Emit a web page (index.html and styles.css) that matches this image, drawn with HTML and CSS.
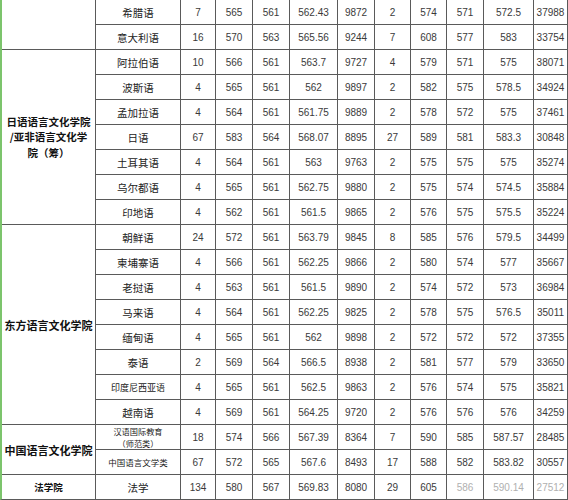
FILE: index.html
```html
<!DOCTYPE html>
<html lang="zh-CN">
<head>
<meta charset="utf-8">
<title>录取分数</title>
<link rel="stylesheet" href="styles.css">
</head>
<body>
<div class="sheet">
  <div class="c college span2"></div>
  <div class="c lang">希腊语</div><div class="c num">7</div><div class="c num">565</div><div class="c num">561</div><div class="c num">562.43</div><div class="c num">9872</div><div class="c num">2</div><div class="c num">574</div><div class="c num">571</div><div class="c num">572.5</div><div class="c num">37988</div>
  <div class="c lang">意大利语</div><div class="c num">16</div><div class="c num">570</div><div class="c num">563</div><div class="c num">565.56</div><div class="c num">9244</div><div class="c num">7</div><div class="c num">608</div><div class="c num">577</div><div class="c num">583</div><div class="c num">33754</div>

  <div class="c college span7"><span class="line">日语语言文化学院</span><span class="line">/亚非语言文化学</span><span class="line">院（筹）</span></div>
  <div class="c lang">阿拉伯语</div><div class="c num">10</div><div class="c num">566</div><div class="c num">561</div><div class="c num">563.7</div><div class="c num">9727</div><div class="c num">4</div><div class="c num">579</div><div class="c num">571</div><div class="c num">575</div><div class="c num">38071</div>
  <div class="c lang">波斯语</div><div class="c num">4</div><div class="c num">565</div><div class="c num">561</div><div class="c num">562</div><div class="c num">9897</div><div class="c num">2</div><div class="c num">582</div><div class="c num">575</div><div class="c num">578.5</div><div class="c num">34924</div>
  <div class="c lang">孟加拉语</div><div class="c num">4</div><div class="c num">564</div><div class="c num">561</div><div class="c num">561.75</div><div class="c num">9889</div><div class="c num">2</div><div class="c num">578</div><div class="c num">572</div><div class="c num">575</div><div class="c num">37461</div>
  <div class="c lang">日语</div><div class="c num">67</div><div class="c num">583</div><div class="c num">564</div><div class="c num">568.07</div><div class="c num">8895</div><div class="c num">27</div><div class="c num">589</div><div class="c num">581</div><div class="c num">583.3</div><div class="c num">30848</div>
  <div class="c lang">土耳其语</div><div class="c num">4</div><div class="c num">564</div><div class="c num">561</div><div class="c num">563</div><div class="c num">9763</div><div class="c num">2</div><div class="c num">575</div><div class="c num">575</div><div class="c num">575</div><div class="c num">35274</div>
  <div class="c lang">乌尔都语</div><div class="c num">4</div><div class="c num">565</div><div class="c num">561</div><div class="c num">562.75</div><div class="c num">9880</div><div class="c num">2</div><div class="c num">575</div><div class="c num">574</div><div class="c num">574.5</div><div class="c num">35884</div>
  <div class="c lang">印地语</div><div class="c num">4</div><div class="c num">562</div><div class="c num">561</div><div class="c num">561.5</div><div class="c num">9865</div><div class="c num">2</div><div class="c num">576</div><div class="c num">575</div><div class="c num">575.5</div><div class="c num">35224</div>

  <div class="c college span8">东方语言文化学院</div>
  <div class="c lang">朝鲜语</div><div class="c num">24</div><div class="c num">572</div><div class="c num">561</div><div class="c num">563.79</div><div class="c num">9845</div><div class="c num">8</div><div class="c num">585</div><div class="c num">576</div><div class="c num">579.5</div><div class="c num">34499</div>
  <div class="c lang">柬埔寨语</div><div class="c num">4</div><div class="c num">566</div><div class="c num">561</div><div class="c num">562.25</div><div class="c num">9866</div><div class="c num">2</div><div class="c num">580</div><div class="c num">574</div><div class="c num">577</div><div class="c num">35667</div>
  <div class="c lang">老挝语</div><div class="c num">4</div><div class="c num">563</div><div class="c num">561</div><div class="c num">561.5</div><div class="c num">9890</div><div class="c num">2</div><div class="c num">574</div><div class="c num">572</div><div class="c num">573</div><div class="c num">36984</div>
  <div class="c lang">马来语</div><div class="c num">4</div><div class="c num">564</div><div class="c num">561</div><div class="c num">562.25</div><div class="c num">9825</div><div class="c num">2</div><div class="c num">578</div><div class="c num">575</div><div class="c num">576.5</div><div class="c num">35011</div>
  <div class="c lang">缅甸语</div><div class="c num">4</div><div class="c num">565</div><div class="c num">561</div><div class="c num">562</div><div class="c num">9898</div><div class="c num">2</div><div class="c num">572</div><div class="c num">572</div><div class="c num">572</div><div class="c num">37355</div>
  <div class="c lang">泰语</div><div class="c num">2</div><div class="c num">569</div><div class="c num">564</div><div class="c num">566.5</div><div class="c num">8938</div><div class="c num">2</div><div class="c num">581</div><div class="c num">577</div><div class="c num">579</div><div class="c num">33650</div>
  <div class="c lang small">印度尼西亚语</div><div class="c num">4</div><div class="c num">565</div><div class="c num">561</div><div class="c num">562.5</div><div class="c num">9863</div><div class="c num">2</div><div class="c num">576</div><div class="c num">574</div><div class="c num">575</div><div class="c num">35821</div>
  <div class="c lang">越南语</div><div class="c num">4</div><div class="c num">569</div><div class="c num">561</div><div class="c num">564.25</div><div class="c num">9720</div><div class="c num">2</div><div class="c num">576</div><div class="c num">576</div><div class="c num">576</div><div class="c num">34259</div>

  <div class="c college span2">中国语言文化学院</div>
  <div class="c lang two"><span class="line">汉语国际教育</span><span class="line">（师范类）</span></div><div class="c num">18</div><div class="c num">574</div><div class="c num">566</div><div class="c num">567.39</div><div class="c num">8364</div><div class="c num">7</div><div class="c num">590</div><div class="c num">585</div><div class="c num">587.57</div><div class="c num">28485</div>
  <div class="c lang smaller">中国语言文学类</div><div class="c num">67</div><div class="c num">572</div><div class="c num">565</div><div class="c num">567.6</div><div class="c num">8493</div><div class="c num">17</div><div class="c num">588</div><div class="c num">582</div><div class="c num">583.82</div><div class="c num">30557</div>

  <div class="c college law">法学院</div>
  <div class="c lang">法学</div><div class="c num">134</div><div class="c num">580</div><div class="c num">567</div><div class="c num">569.83</div><div class="c num">8080</div><div class="c num">29</div><div class="c num">605</div><div class="c num faint">586</div><div class="c num faint">590.14</div><div class="c num faint">27512</div>
</div>
</body>
</html>
```

FILE: styles.css
```css
html, body {
  margin: 0;
  padding: 0;
  background: #ffffff;
}

body {
  width: 568px;
  height: 500px;
  overflow: hidden;
  font-family: "Noto Sans CJK SC", "Noto Sans", sans-serif;
}

.sheet {
  display: grid;
  grid-template-columns: 93px 84px 34px 36px 36px 47px 36px 35px 35px 36px 49px 33px;
  grid-template-rows: repeat(20, 24px);
  gap: 1px;
  background: #5a5a5a;
  border-left: 2px solid #7cc46c;
  border-right: 1px solid #5a5a5a;
  border-bottom: 1px solid #5a5a5a;
  width: 565px;
}

.c {
  background: #ffffff;
  display: flex;
  align-items: center;
  justify-content: center;
  text-align: center;
  color: #222222;
  overflow: hidden;
  white-space: nowrap;
}

.college {
  flex-direction: column;
  font-weight: 700;
  font-size: 11px;
  line-height: 16px;
  color: #111111;
}

.college .line {
  display: block;
  font-size: 10.5px;
  height: 15.3px;
  line-height: 15.3px;
}

.span2 { grid-row: span 2; }
.span7 { grid-row: span 7; }
.span8 { grid-row: span 8; }

.law {
  font-size: 9.5px;
}

.lang {
  font-size: 10.5px;
  line-height: 12px;
  padding-top: 1px;
}

.lang.small {
  font-size: 9px;
  line-height: 13px;
}

.lang.two {
  flex-direction: column;
  font-size: 8.2px;
  padding-top: 0;
}

.lang.two .line {
  display: block;
  height: 12px;
  line-height: 12px;
}

.lang.smaller {
  font-size: 8.5px;
  line-height: 13px;
}

.num {
  font-family: "Liberation Sans", Arial, sans-serif;
  font-size: 10px;
  color: #3a3a3a;
  padding-top: 1px;
}

.faint {
  color: #b0b0b0;
}
```
